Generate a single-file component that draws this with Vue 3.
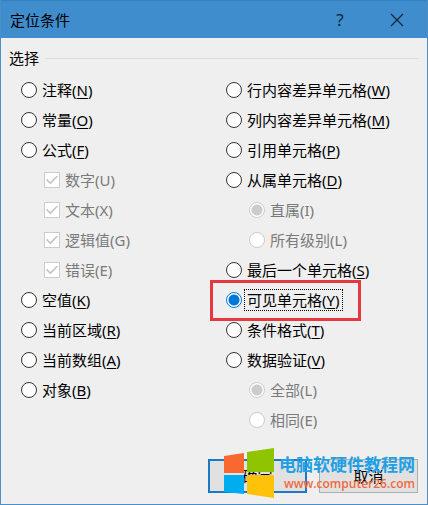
<script setup>
import { ref } from 'vue'

const left = [
  { t: '注释', k: 'N' },
  { t: '常量', k: 'O' },
  { t: '公式', k: 'F' },
  { t: '数字', k: 'U', type: 'checkbox', sub: true },
  { t: '文本', k: 'X', type: 'checkbox', sub: true },
  { t: '逻辑值', k: 'G', type: 'checkbox', sub: true },
  { t: '错误', k: 'E', type: 'checkbox', sub: true },
  { t: '空值', k: 'K' },
  { t: '当前区域', k: 'R' },
  { t: '当前数组', k: 'A' },
  { t: '对象', k: 'B' }
]
const right = [
  { t: '行内容差异单元格', k: 'W' },
  { t: '列内容差异单元格', k: 'M' },
  { t: '引用单元格', k: 'P' },
  { t: '从属单元格', k: 'D' },
  { t: '直属', k: 'I', sub: true, group: 'level', on: true },
  { t: '所有级别', k: 'L', sub: true, group: 'level' },
  { t: '最后一个单元格', k: 'S' },
  { t: '可见单元格', k: 'Y', marked: true },
  { t: '条件格式', k: 'T' },
  { t: '数据验证', k: 'V' },
  { t: '全部', k: 'L', sub: true, group: 'valid', on: true },
  { t: '相同', k: 'E', sub: true, group: 'valid' }
]
const columns = [left, right]
const chosen = ref('Y')
</script>

<template>
  <main class="dialog">
    <header class="titlebar">
      <h1>定位条件</h1>
      <button class="tool" aria-label="帮助">?</button>
      <button class="tool close" aria-label="关闭">
        <svg width="14" height="14" viewBox="0 0 14 14"><path d="M1 1L13 13M13 1L1 13" stroke="#10243a" stroke-width="1.2" fill="none" /></svg>
      </button>
    </header>
    <div class="legend"><span>选择</span><i></i></div>
    <div class="columns">
      <div v-for="(col, c) in columns" :key="c" class="col">
        <label v-for="o in col" :key="o.t" class="row" :class="{ sub: o.sub, marked: o.marked }">
          <input v-if="o.type === 'checkbox'" type="checkbox" checked disabled />
          <input v-else-if="o.sub" type="radio" :name="o.group" :checked="o.on" disabled />
          <input v-else v-model="chosen" type="radio" name="target" :value="o.k" />
          <span class="text">{{ o.t }}(<u v-if="!o.sub">{{ o.k }}</u><template v-else>{{ o.k }}</template>)</span>
        </label>
      </div>
    </div>
    <footer class="actions">
      <button class="btn primary">确定</button>
      <button class="btn">取消</button>
      <div class="watermark">
        <svg width="50" height="51" viewBox="0 0 50 51">
          <path d="M0 8L20 5V25H0Z" fill="#f9682f" />
          <path d="M23 4L50 0V24H23Z" fill="#8fc400" />
          <path d="M0 27H20V46L0 44Z" fill="#00adef" />
          <path d="M23 27H50V50L23 46Z" fill="#ffc20a" />
        </svg>
        <div class="words">
          <strong>电脑软硬件教程网</strong>
          <span>www.computer26.com</span>
        </div>
      </div>
    </footer>
  </main>
</template>

<style>
body {
  margin: 0;
}
</style>

<style scoped>
.dialog {
  box-sizing: border-box;
  min-height: 100vh;
  display: flex;
  flex-direction: column;
  border: 1px solid #4a8fc8;
  border-top: 0;
  background: #efefef;
  color: #000;
  font: 15px/20px "Noto Sans", "Noto Sans CJK SC", sans-serif;
}
.titlebar {
  display: flex;
  align-items: center;
  height: 38px;
  padding: 0 23px 0 9px;
  background: #3f8dcd;
  border-top: 1px solid #3580bf;
  box-sizing: border-box;
}
h1 {
  flex: 1;
  margin: 0;
  font-size: 15px;
  font-weight: 400;
}
.tool {
  width: 14px;
  padding: 0;
  border: 0;
  background: none;
  font: inherit;
  font-size: 17px;
  color: #10243a;
}
.close {
  display: flex;
  margin-left: 43px;
}
.legend {
  display: flex;
  align-items: center;
  gap: 6px;
  padding: 10px 8px 7px;
}
.legend i {
  flex: 1;
  height: 1px;
  background: #dcdcdc;
}
.columns {
  display: grid;
  grid-template-columns: 205fr 201fr;
  padding-left: 20px;
}
.row {
  display: flex;
  align-items: center;
  gap: 3px;
  height: 30px;
  position: relative;
}
.sub {
  padding-left: 23px;
  color: #7a7a7a;
}
.text {
  padding: 0 2px;
  white-space: nowrap;
}
u {
  text-underline-offset: 2px;
  text-decoration-thickness: 1px;
}
input {
  appearance: none;
  box-sizing: border-box;
  flex: none;
  width: 16px;
  height: 16px;
  margin: 0;
  border: 1px solid #333;
  border-radius: 50%;
  background: #fff;
}
input:checked {
  border-color: #0078d7;
  background: radial-gradient(circle, #0078d7 0 5px, #fff 6px);
}
input:disabled {
  border-color: #ccc;
}
input:disabled:checked {
  background: radial-gradient(circle, #ccc 0 5px, #fff 6px);
}
input[type="checkbox"]:disabled:checked {
  border-radius: 0;
  background: #fff;
  display: grid;
  place-items: center;
}
input[type="checkbox"]::after {
  content: "";
  width: 12px;
  height: 9px;
  background: #c6c6c6;
  clip-path: polygon(0 50%, 10% 36%, 36% 72%, 90% 0, 100% 12%, 37% 100%);
}
.marked .text {
  outline: 1px dotted #000;
}
.marked::before {
  content: "";
  position: absolute;
  left: -16px;
  top: -5px;
  width: 145px;
  height: 35px;
  border: 3px solid #e5393f;
}
.actions {
  position: relative;
  display: flex;
  justify-content: flex-end;
  gap: 12px;
  margin-top: auto;
  padding: 0 9px 11px;
}
.btn {
  width: 99px;
  height: 34px;
  padding: 0;
  border: 1px solid #adadad;
  background: #e1e1e1;
  font: inherit;
  color: #000;
}
.primary {
  border: 2px solid #1c78c4;
}
.watermark {
  position: absolute;
  right: 12px;
  bottom: 5px;
  display: flex;
  gap: 5px;
  pointer-events: none;
}
.words {
  display: flex;
  flex-direction: column;
  align-items: flex-end;
  padding-top: 6px;
}
.words strong {
  color: #20a0e4;
  font-size: 17px;
  line-height: 22px;
  white-space: nowrap;
}
.words span {
  color: #f06a3c;
  font: 600 12px/16px "Open Sans", sans-serif;
}
</style>
